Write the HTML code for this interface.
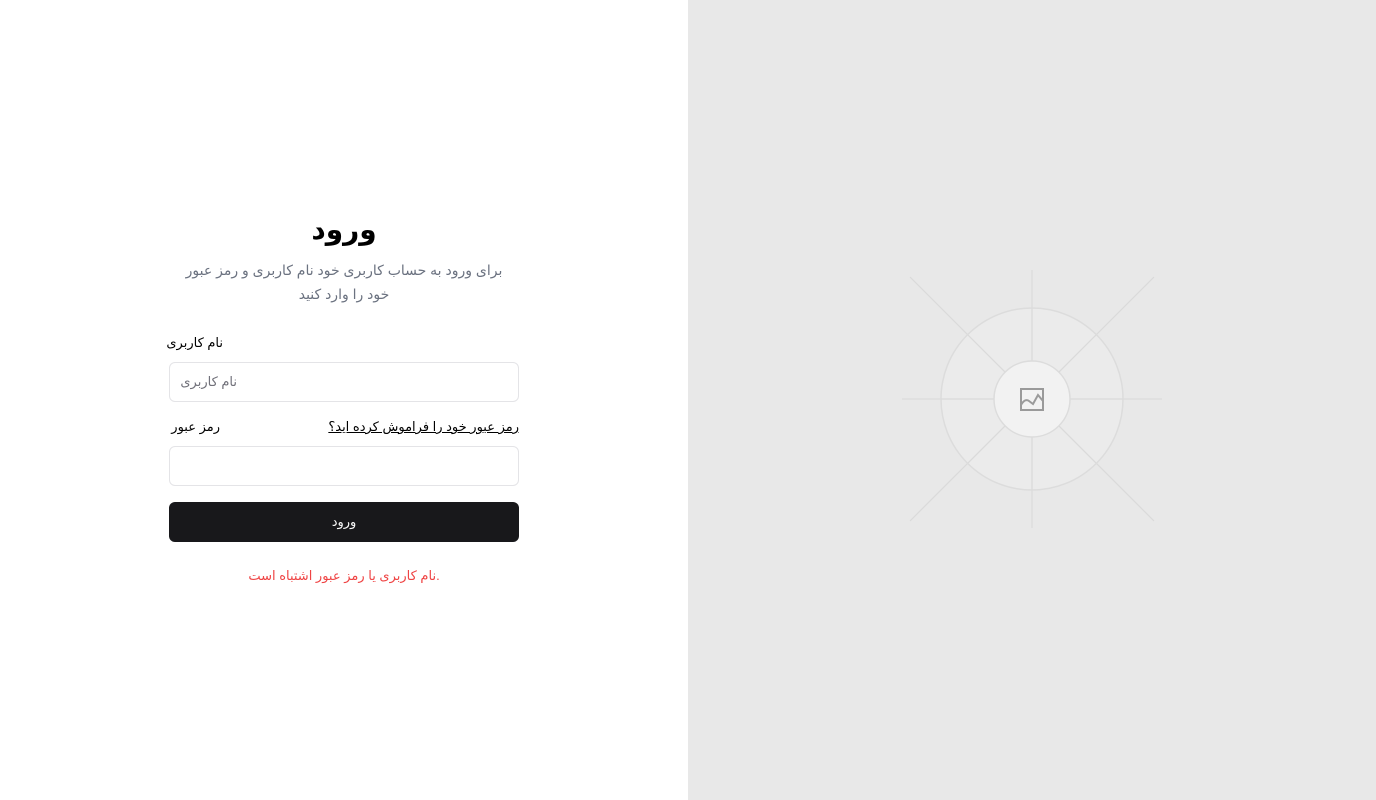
<!DOCTYPE html>
<html dir="rtl"><head><meta charset="utf-8"><style>
*{margin:0;padding:0;box-sizing:border-box}
body{width:1376px;height:800px;overflow:hidden;background:#fff;font-family:"Liberation Sans","DejaVu Sans",sans-serif;position:relative}
.right{position:absolute;left:688px;top:0;width:688px;height:800px;background:#e8e8e8}
.a{position:absolute;white-space:nowrap}
h1{position:absolute;left:169px;width:350px;top:210px;text-align:center;font-size:28px;font-weight:bold;color:#000;line-height:40px}
.sub{position:absolute;left:177px;width:334px;top:258px;text-align:center;font-size:14px;color:#6b7280;line-height:24px}
.inp{position:absolute;left:169px;width:350px;height:40px;border:1px solid #e4e4e7;border-radius:6px;background:#fff}
.btn{position:absolute;left:169px;top:502px;width:350px;height:40px;background:#18181b;border-radius:6px;color:#fafafa;font-size:13px;text-align:center;line-height:40px}
</style></head><body>
<h1>ورود</h1>
<div class="sub">برای ورود به حساب کاربری خود نام کاربری و رمز عبور خود را وارد کنید</div>
<div class="a" style="right:1153px;top:334px;font-size:13px;color:#000;line-height:18px">نام کاربری</div>
<div class="inp" style="top:362px"><span class="a" style="right:281px;top:11px;font-size:13px;color:#71717a">نام کاربری</span></div>
<div class="a" style="right:1156px;top:418px;font-size:13px;color:#000;line-height:18px">رمز عبور</div>
<div class="a" style="right:857px;top:418px;font-size:13px;color:#000;line-height:18px;text-decoration:underline">رمز عبور خود را فراموش کرده اید؟</div>
<div class="inp" style="top:446px"></div>
<div class="btn">ورود</div>
<div class="a" style="left:169px;width:350px;top:566px;text-align:center;font-size:13px;color:#ef4444;line-height:20px">.نام کاربری یا رمز عبور اشتباه است</div>
<div class="right">
<svg width="688" height="800" style="position:absolute;left:0;top:0">
<g stroke="#dadada" stroke-width="1.2">
<line x1="344" y1="270" x2="344" y2="528"/>
<line x1="214" y1="399" x2="474" y2="399"/>
<line x1="222" y1="277" x2="466" y2="521"/>
<line x1="466" y1="277" x2="222" y2="521"/>
</g>
<circle cx="344" cy="399" r="91" fill="#ececec" fill-opacity="0.6" stroke="#dcdcdc" stroke-width="1.5"/>
<g stroke="#dadada" stroke-width="1.2">
<line x1="344" y1="308" x2="344" y2="490"/>
<line x1="253" y1="399" x2="435" y2="399"/>
<line x1="280" y1="335" x2="408" y2="463"/>
<line x1="408" y1="335" x2="280" y2="463"/>
</g>
<circle cx="344" cy="399" r="38" fill="#f2f2f2" stroke="#dcdcdc" stroke-width="1.5"/>
<g fill="none" stroke="#9a9a9a" stroke-width="2">
<rect x="333" y="389" width="22" height="21"/>
<path d="M333 405 Q337 398 341 401 L345 404 L350 395 L355 401"/>
</g>
</svg>
</div>
</body></html>
